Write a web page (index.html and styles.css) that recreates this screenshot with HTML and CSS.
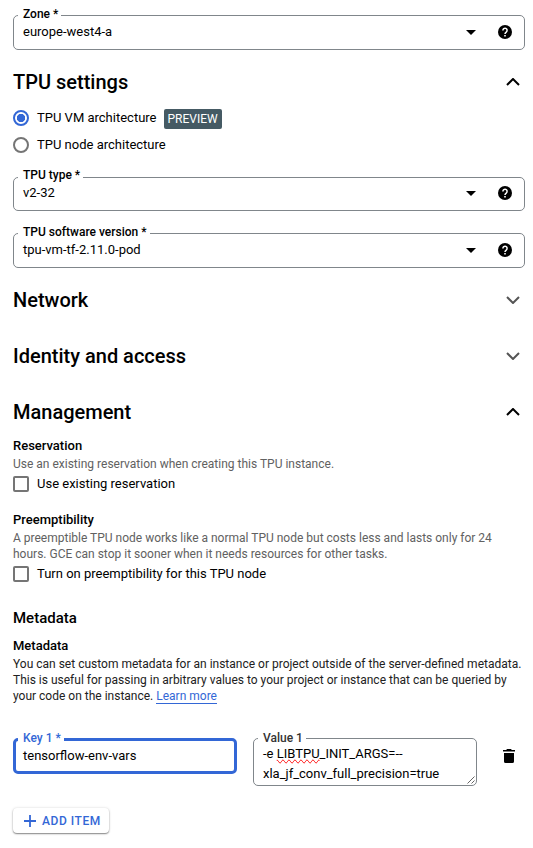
FILE: index.html
```html
<!DOCTYPE html>
<html lang="en">
<head>
<meta charset="utf-8">
<title>Create TPU node</title>
<link rel="stylesheet" href="styles.css">
</head>
<body>
<svg class="defs" width="0" height="0" aria-hidden="true">
  <symbol id="help" viewBox="0 0 14 14"><circle cx="7" cy="7" r="7" fill="#000"/><path d="M4.9 5.4a2.1 2.1 0 1 1 3.5 1.5C7.5 7.6 7 7.9 7 9" fill="none" stroke="#fff" stroke-width="1.5"/><path d="M6.2 9.9h1.6v1.6H6.2z" fill="#fff"/></symbol>
  <symbol id="arrow" viewBox="0 0 10 5"><path d="M0 0h10L5 5z"/></symbol>
  <symbol id="chevron" viewBox="0 0 14 8"><path d="M1 1l6 6 6-6" fill="none" stroke="currentColor" stroke-width="2"/></symbol>
</svg>
<main class="form">
  <div class="field zone">
    <label class="field-label">Zone *</label>
    <span class="field-value">europe-west4-a</span>
    <svg class="arrow"><use href="#arrow"/></svg>
    <svg class="help"><use href="#help"/></svg>
  </div>

  <section class="section-head first"><h2>TPU settings</h2><svg class="chevron open"><use href="#chevron"/></svg></section>
  <div class="radios">
    <div class="choice"><span class="radio checked"></span><span>TPU VM architecture</span><span class="chip">PREVIEW</span></div>
    <div class="choice"><span class="radio"></span><span>TPU node architecture</span></div>
  </div>
  <div class="field type">
    <label class="field-label">TPU type *</label>
    <span class="field-value">v2-32</span>
    <svg class="arrow"><use href="#arrow"/></svg>
    <svg class="help"><use href="#help"/></svg>
  </div>
  <div class="field version">
    <label class="field-label">TPU software version *</label>
    <span class="field-value">tpu-vm-tf-2.11.0-pod</span>
    <svg class="arrow"><use href="#arrow"/></svg>
    <svg class="help"><use href="#help"/></svg>
  </div>

  <section class="section-head"><h2>Network</h2><svg class="chevron"><use href="#chevron"/></svg></section>
  <section class="section-head"><h2>Identity and access</h2><svg class="chevron"><use href="#chevron"/></svg></section>
  <section class="section-head"><h2>Management</h2><svg class="chevron open"><use href="#chevron"/></svg></section>

  <div class="group reservation">
    <h4>Reservation</h4>
    <p class="muted">Use an existing reservation when creating this TPU instance.</p>
    <div class="check"><span class="box"></span><span>Use existing reservation</span></div>
  </div>
  <div class="group preempt">
    <h4>Preemptibility</h4>
    <p class="muted">A preemptible TPU node works like a normal TPU node but costs less and lasts only for 24<br>hours. GCE can stop it sooner when it needs resources for other tasks.</p>
    <div class="check"><span class="box"></span><span>Turn on preemptibility for this TPU node</span></div>
  </div>
  <div class="group metadata">
    <h3>Metadata</h3>
    <h4>Metadata</h4>
    <p>You can set custom metadata for an instance or project outside of the server-defined metadata.<br>This is useful for passing in arbitrary values to your project or instance that can be queried by<br>your code on the instance. <a class="link">Learn more</a></p>
  </div>

  <div class="pair">
    <div class="field key">
      <label class="field-label">Key 1 *</label>
      <span class="field-value">tensorflow-env-vars</span>
    </div>
    <div class="field value">
      <label class="field-label">Value 1</label>
      <span class="field-value">-e <span class="misspelt">LIBTPU</span>_INIT_ARGS=--<br>xla_jf_conv_full_precision=true</span>
      <svg class="grip" viewBox="0 0 8 8"><path d="M.5 7.5l7-7M4.5 7.5l3-3" stroke="#555" stroke-width=".9"/></svg>
    </div>
    <svg class="trash" viewBox="0 0 12 14"><path d="M0 1h3.2L4 0h4l.8 1H12v1.5H0zM1 4h10v8.4Q11 14 9.4 14H2.6Q1 14 1 12.4z"/></svg>
  </div>
  <button class="add"><svg viewBox="0 0 12 12"><path d="M6 0v12M0 6h12" stroke="currentColor" stroke-width="1.8"/></svg><span>ADD ITEM</span></button>
</main>
</body>
</html>
```

FILE: styles.css
```css
* { box-sizing: border-box; }
body {
  margin: 0;
  background: #fff;
  color: #000;
  font: 13px/16px Roboto, "Liberation Sans", sans-serif;
}
h2, h3, h4, p { margin: 0; font-weight: 500; }
svg { display: block; flex: none; }
.defs { position: absolute; }
.form { width: 533px; height: 848px; padding: 15px 8px 0 13px; overflow: hidden; }

.field {
  position: relative;
  display: flex;
  align-items: center;
  height: 35px;
  padding: 0 12px 1px 9px;
  border: 1px solid #80868b;
  border-radius: 5px;
}
.field-label {
  position: absolute;
  top: -10px;
  left: 4px;
  padding: 0 3px 0 5px;
  background: #fff;
  font-size: 12px;
  font-weight: 500;
  line-height: 16px;
  white-space: nowrap;
}
.field-value { flex: 1; white-space: nowrap; }
.arrow { width: 10px; height: 5px; margin-right: 22px; }
.help { width: 14px; height: 14px; }
.type { height: 34px; margin-top: 19px; padding-bottom: 2px; }
.type .field-label { top: -11px; }
.version { margin-top: 22px; }

.section-head {
  display: flex;
  align-items: center;
  justify-content: space-between;
  height: 46px;
  margin-top: 10px;
  padding-right: 5px;
}
.version + .section-head, .section-head.first { margin-top: 9px; }
h2 { font-size: 20px; line-height: 24px; }
.chevron { width: 14px; height: 8px; color: #555; }
.chevron.open { color: #000; transform: rotate(180deg); }

.radios { display: flex; flex-direction: column; gap: 1px; }
.choice { display: flex; align-items: center; height: 26px; }
.radio {
  width: 16px;
  height: 16px;
  margin-right: 8px;
  border: 2px solid #757575;
  border-radius: 50%;
}
.radio.checked {
  border-color: #3367d6;
  background: radial-gradient(circle, #3367d6 3.8px, #fff 4.5px);
}
.chip {
  height: 20px;
  margin: 2px 0 0 7px;
  padding: 0 4px;
  border-radius: 2px;
  background: #455a64;
  color: #fff;
  font-size: 12px;
  line-height: 20px;
}

h4 { font-size: 13px; line-height: 16px; }
p { margin-top: 2px; color: #212121; font-size: 12px; font-weight: 400; line-height: 16px; white-space: nowrap; }
.muted { color: #616161; }
.check { display: flex; align-items: center; height: 16px; margin-top: 4px; }
.box { width: 16px; height: 16px; margin-right: 8px; border: 2px solid #757575; border-radius: 2px; }
.reservation { margin-top: 3px; }
.preempt { margin-top: 20px; }
.metadata { margin-top: 26px; }
h3 { margin-bottom: 10px; font-size: 15px; line-height: 20px; }
.link { border-bottom: 1px solid #3367d6; color: #3367d6; }

.pair { display: flex; align-items: flex-start; margin-top: 34px; }
.key { width: 224px; height: 36px; padding: 0 0 0 7px; border: 3px solid #3367d6; }
.key .field-label { top: -11px; left: 2px; color: #3367d6; }
.value { width: 224px; height: 48px; margin-left: 16px; padding: 3px 0 0 9px; line-height: 20px; }
.value .field-label { top: -9px; color: #333; }
.misspelt { text-decoration-line: spelling-error; }
.grip { position: absolute; right: 1px; bottom: 1px; width: 8px; height: 8px; }
.trash { width: 12px; height: 14px; margin: 11px 0 0 26px; }
.add {
  display: flex;
  align-items: center;
  gap: 6px;
  width: 96px;
  height: 25px;
  margin-top: 22px;
  padding: 0 0 0 11px;
  border: 0;
  border-radius: 4px;
  background: #fff;
  box-shadow: 0 1px 1.5px rgba(0, 0, 0, .45), 0 0 3px rgba(0, 0, 0, .12);
  color: #3367d6;
  font: 500 12px/16px Roboto, "Liberation Sans", sans-serif;
  letter-spacing: .55px;
  white-space: nowrap;
}
.add svg { width: 12px; height: 12px; }
```
